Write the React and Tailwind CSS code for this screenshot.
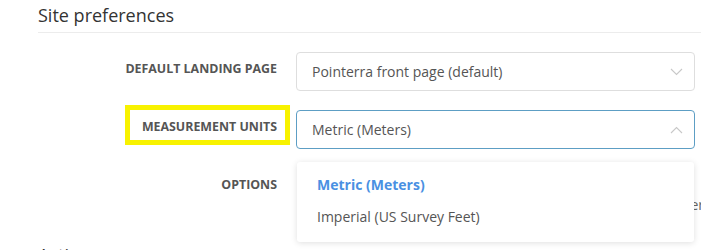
import React from "react";

function Chevron({ up }) {
  return (
    <svg width="13" height="8" viewBox="0 0 13 8" className="shrink-0">
      <path
        d={up ? "M1 7 L6.5 1.5 L12 7" : "M1 1 L6.5 6.5 L12 1"}
        fill="none"
        stroke="#c8c8c8"
        strokeWidth="1.1"
      />
    </svg>
  );
}

function Select({ text, active, children }) {
  return (
    <div className="relative w-[399px]">
      <div
        className={
          "h-[39px] flex items-center justify-between pl-[15px] pr-[11px] rounded-[4px] border bg-white " +
          (active ? "border-[#5d9ec4]" : "border-[#dedede]")
        }
      >
        <span className="text-[14px] text-[#555] leading-[20px]">{text}</span>
        <Chevron up={active} />
      </div>
      {children}
    </div>
  );
}

export default function App() {
  return (
    <div
      className="w-[701px] h-[250px] overflow-hidden bg-white pl-[38px] relative"
      style={{ fontFamily: '"Open Sans", "Liberation Sans", sans-serif' }}
    >
      <h2 className="pt-[2px] pb-[4px] text-[18px] leading-[26px] text-[#333] font-normal border-b border-[#ececec]">
        Site preferences
      </h2>

      <div className="mt-[19px] flex flex-col gap-[19px]">
        <div className="flex">
          <div className="w-[258px] flex justify-end items-center pb-[6px] pr-[19px]">
            <span className="text-[12.4px] leading-[16px] font-bold text-[#555]">
              DEFAULT LANDING PAGE
            </span>
          </div>
          <Select text="Pointerra front page (default)" />
        </div>

        <div className="flex">
          <div className="w-[258px] flex justify-end items-center pb-[6px] pr-[19px]">
            <span className="relative text-[12.4px] leading-[16px] font-bold text-[#555]">
              MEASUREMENT UNITS
              <span className="absolute -top-[14px] -bottom-[10px] -left-[17px] -right-[13px] border-[5px] border-[#f8f200]" />
            </span>
          </div>
          <Select text="Metric (Meters)" active>
            <div className="absolute z-10 top-full mt-[13px] left-[1px] right-[1px] bg-white rounded-[3px] pt-[6px] pb-[10px] shadow-[0_1px_6px_rgba(0,0,0,0.13)]">
              <div className="h-[32px] flex items-center pl-[20px] text-[14px] font-bold text-[#4a90e2]">
                Metric (Meters)
              </div>
              <div className="h-[32px] flex items-center pl-[20px] text-[14px] text-[#555]">
                Imperial (US Survey Feet)
              </div>
            </div>
          </Select>
        </div>

        <div className="flex">
          <div className="w-[258px] h-[39px] flex justify-end items-center pb-[6px] pr-[19px]">
            <span className="text-[12.4px] leading-[16px] font-bold text-[#555]">
              OPTIONS
            </span>
          </div>
          <div className="w-[399px] pt-[27px]">
            <div className="text-right -mr-[9px] text-[14px] leading-[20px] text-[#666] whitespace-nowrap">
              Show viewer
            </div>
          </div>
        </div>
      </div>

      <h2 className="mt-[27px] text-[18px] leading-[26px] text-[#333] font-normal">
        Actions
      </h2>
    </div>
  );
}
